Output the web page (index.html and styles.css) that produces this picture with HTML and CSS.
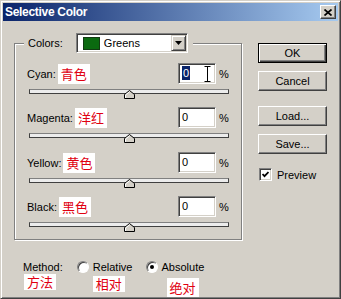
FILE: index.html
```html
<!DOCTYPE html>
<html lang="en">
<head>
    <meta charset="UTF-8">
    <title>Selective Color</title>
    <link rel="stylesheet" href="styles.css">
</head>
<body>

    <div class="window">
        <div class="titlebar">
            <span class="title">Selective Color</span>
            <span class="close-btn">
                <svg width="8" height="7" viewBox="0 0 8 7"><path d="M0.5 0.5 L7.5 6.5 M7.5 0.5 L0.5 6.5" stroke="#000" stroke-width="1.7"/></svg>
            </span>
        </div>

        <div class="dialog">
            <div class="left-col">
                <div class="group">
                    <div class="legend">
                        <span>Colors:</span>
                        <span class="dropdown">
                            <span class="swatch"></span>
                            <span class="dropdown-text">Greens</span>
                            <span class="dropdown-arrow">
                                <svg width="7" height="4" viewBox="0 0 7 4"><path d="M0 0 H7 L3.5 4 Z" fill="#000"/></svg>
                            </span>
                        </span>
                    </div>

                    <div class="channel channel-first">
                        <div class="channel-row">
                            <span class="label">Cyan:</span>
                            <span class="cn">青色</span>
                            <span class="num-input"><span class="selected">0</span>
                                <svg class="ibeam" width="7" height="16" viewBox="0 0 7 16"><path d="M0.5 0.5 H6.5 M3.5 0.5 V15.5 M0.5 15.5 H6.5" stroke="#000" stroke-width="1" fill="none"/></svg>
                            </span>
                            <span class="pct">%</span>
                        </div>
                        <div class="track">
                            <svg class="thumb" width="11" height="9" viewBox="0 0 11 9"><path d="M5.5 0.5 L10.5 4.5 V8.5 H0.5 V4.5 Z" fill="#d4d0c8" stroke="#000"/><path d="M1.5 8 V5 L5.5 1.8" stroke="#fff" fill="none"/></svg>
                        </div>
                    </div>

                    <div class="channel">
                        <div class="channel-row">
                            <span class="label">Magenta:</span>
                            <span class="cn">洋红</span>
                            <span class="num-input">0</span>
                            <span class="pct">%</span>
                        </div>
                        <div class="track">
                            <svg class="thumb" width="11" height="9" viewBox="0 0 11 9"><path d="M5.5 0.5 L10.5 4.5 V8.5 H0.5 V4.5 Z" fill="#d4d0c8" stroke="#000"/><path d="M1.5 8 V5 L5.5 1.8" stroke="#fff" fill="none"/></svg>
                        </div>
                    </div>

                    <div class="channel channel-third">
                        <div class="channel-row">
                            <span class="label">Yellow:</span>
                            <span class="cn">黄色</span>
                            <span class="num-input">0</span>
                            <span class="pct">%</span>
                        </div>
                        <div class="track">
                            <svg class="thumb" width="11" height="9" viewBox="0 0 11 9"><path d="M5.5 0.5 L10.5 4.5 V8.5 H0.5 V4.5 Z" fill="#d4d0c8" stroke="#000"/><path d="M1.5 8 V5 L5.5 1.8" stroke="#fff" fill="none"/></svg>
                        </div>
                    </div>

                    <div class="channel">
                        <div class="channel-row">
                            <span class="label">Black:</span>
                            <span class="cn">黑色</span>
                            <span class="num-input">0</span>
                            <span class="pct">%</span>
                        </div>
                        <div class="track">
                            <svg class="thumb" width="11" height="9" viewBox="0 0 11 9"><path d="M5.5 0.5 L10.5 4.5 V8.5 H0.5 V4.5 Z" fill="#d4d0c8" stroke="#000"/><path d="M1.5 8 V5 L5.5 1.8" stroke="#fff" fill="none"/></svg>
                        </div>
                    </div>
                </div>

                <div class="method">
                    <div class="method-item">
                        <span class="method-line">Method:</span>
                        <span class="cn cn-method">方法</span>
                    </div>
                    <div class="method-item method-relative">
                        <span class="method-line"><span class="radio"></span>Relative</span>
                        <span class="cn cn-relative">相对</span>
                    </div>
                    <div class="method-item method-absolute">
                        <span class="method-line"><span class="radio"><span class="dot"></span></span>Absolute</span>
                        <span class="cn cn-absolute">绝对</span>
                    </div>
                </div>
            </div>

            <div class="right-col">
                <div class="btn btn-default">OK</div>
                <div class="btn">Cancel</div>
                <div class="btn btn-gap">Load...</div>
                <div class="btn">Save...</div>
                <div class="check-line">
                    <span class="checkbox">
                        <svg width="7" height="7" viewBox="0 0 7 7"><path d="M0.5 3 L2.5 5.2 L6.5 1" stroke="#000" stroke-width="1.8" fill="none"/></svg>
                    </span>
                    <span>Preview</span>
                </div>
            </div>
        </div>
    </div>

</body>
</html>
```

FILE: styles.css
```css
body {
    margin: 0;
    font-family: 'Liberation Sans', Arial, sans-serif;
    font-size: 11px;
    color: #000;
    background: #d4d0c8;
}
.window {
    width: 341px;
    height: 299px;
    box-sizing: border-box;
    background: #d4d0c8;
    border: 1px solid;
    border-color: #d4d0c8 #404040 #404040 #d4d0c8;
    box-shadow: inset 1px 1px 0 #fff, inset -1px -1px 0 #808080;
    padding: 2px;
    overflow: hidden;
}
.titlebar {
    height: 18px;
    display: flex;
    align-items: center;
    background: linear-gradient(to right, #0a246a, #a6caf0);
    padding-left: 2px;
}
.title {
    color: #fff;
    font-weight: bold;
    font-size: 12px;
    letter-spacing: -0.3px;
}
.close-btn {
    margin-left: auto;
    margin-right: 2px;
    width: 16px;
    height: 14px;
    box-sizing: border-box;
    background: #d4d0c8;
    border: 1px solid;
    border-color: #fff #404040 #404040 #fff;
    box-shadow: inset -1px -1px 0 #808080;
    display: flex;
    align-items: center;
    justify-content: center;
}

/* dialog body */
.dialog {
    display: flex;
    align-items: flex-start;
    padding: 22px 0 0 11px;
}
.left-col {
    width: 228px;
}
.group {
    border: 1px solid #808080;
    box-shadow: inset 1px 1px 0 #fff, 1px 1px 0 #fff;
    padding: 0 12px 12px 9px;
}
.legend {
    display: flex;
    align-items: center;
    width: fit-content;
    height: 20px;
    margin-top: -11px;
    padding: 0 5px 0 4px;
    background: #d4d0c8;
}
.dropdown {
    display: flex;
    align-items: center;
    width: 112px;
    height: 20px;
    box-sizing: border-box;
    margin-left: 13px;
    background: #fff;
    border: 1px solid;
    border-color: #808080 #fff #fff #808080;
    box-shadow: inset 1px 1px 0 #404040, inset -1px -1px 0 #d4d0c8;
    padding: 0 1px 0 6px;
}
.swatch {
    width: 17px;
    height: 13px;
    box-sizing: border-box;
    background: #0b6a10;
    border: 1px solid #123a12;
}
.dropdown-text {
    margin-left: 4px;
}
.dropdown-arrow {
    margin-left: auto;
    width: 15px;
    height: 16px;
    box-sizing: border-box;
    background: #d4d0c8;
    border: 1px solid;
    border-color: #d4d0c8 #404040 #404040 #d4d0c8;
    box-shadow: inset 1px 1px 0 #fff, inset -1px -1px 0 #808080;
    display: flex;
    align-items: center;
    justify-content: center;
}

/* channel sliders */
.channel {
    margin: 13px 0 0 3px;
}
.channel-first {
    margin-top: 10px;
}
.channel-third {
    margin-top: 14px;
}
.channel-row {
    display: flex;
    align-items: center;
    height: 21px;
}
.label {
    margin-right: 2px;
}
.cn {
    font-family: 'Noto Sans CJK SC', sans-serif;
    font-size: 13px;
    color: #e00010;
    background: #fff;
    padding: 0 3px;
    line-height: 20px;
}
.num-input {
    position: relative;
    margin-left: auto;
    width: 38px;
    height: 21px;
    box-sizing: border-box;
    background: #fff;
    border: 1px solid;
    border-color: #808080 #fff #fff #808080;
    box-shadow: inset 1px 1px 0 #404040, inset -1px -1px 0 #d4d0c8;
    padding: 1px 0 0 3px;
    line-height: 17px;
}
.selected {
    background: #0a246a;
    color: #fff;
    padding: 1px 1px;
}
.ibeam {
    position: absolute;
    left: 25px;
    top: 2px;
}
.pct {
    width: 10px;
    margin-left: 3px;
}
.track {
    position: relative;
    margin: 5px 0 0 2px;
    height: 5px;
    box-sizing: border-box;
    background: #ececec;
    border: 1px solid #404040;
    border-top-color: #808080;
}
.thumb {
    position: absolute;
    left: 94px;
    top: 0;
}

/* method radios */
.method {
    display: flex;
    align-items: flex-start;
    margin-top: 20px;
    padding-left: 9px;
}
.method-item {
    display: flex;
    flex-direction: column;
    align-items: flex-start;
}
.method-line {
    display: flex;
    align-items: center;
    height: 14px;
    line-height: 14px;
}
.method-relative {
    margin-left: 14px;
}
.method-absolute {
    margin-left: 13px;
}
.radio {
    width: 12px;
    height: 12px;
    box-sizing: border-box;
    border-radius: 50%;
    background: #fff;
    border: 1px solid;
    border-color: #808080 #fff #fff #808080;
    box-shadow: inset 1px 1px 0 #404040;
    margin-right: 4px;
    display: flex;
    align-items: center;
    justify-content: center;
}
.dot {
    width: 4px;
    height: 4px;
    border-radius: 50%;
    background: #000;
}
.cn-method {
    margin: 0 0 0 1px;
    line-height: 16px;
}
.cn-relative {
    margin: 2px 0 0 16px;
    line-height: 16px;
}
.cn-absolute {
    margin: 4px 0 0 21px;
    line-height: 19px;
}

/* buttons column */
.right-col {
    margin-left: 16px;
    display: flex;
    flex-direction: column;
}
.btn {
    width: 69px;
    height: 20px;
    box-sizing: border-box;
    margin-bottom: 8px;
    border: 1px solid;
    border-color: #fff #404040 #404040 #fff;
    box-shadow: inset -1px -1px 0 #808080;
    display: flex;
    align-items: center;
    justify-content: center;
}
.btn-default {
    border: 1px solid #000;
    box-shadow: inset 1px 1px 0 #fff, inset -1px -1px 0 #404040, inset -2px -2px 0 #808080;
}
.btn-gap {
    margin-top: 7px;
}
.check-line {
    display: flex;
    align-items: center;
    margin: 6px 0 0 1px;
}
.checkbox {
    width: 13px;
    height: 13px;
    box-sizing: border-box;
    background: #fff;
    border: 1px solid;
    border-color: #808080 #fff #fff #808080;
    box-shadow: inset 1px 1px 0 #404040, inset -1px -1px 0 #d4d0c8;
    margin-right: 5px;
    display: flex;
    align-items: center;
    justify-content: center;
}
```
